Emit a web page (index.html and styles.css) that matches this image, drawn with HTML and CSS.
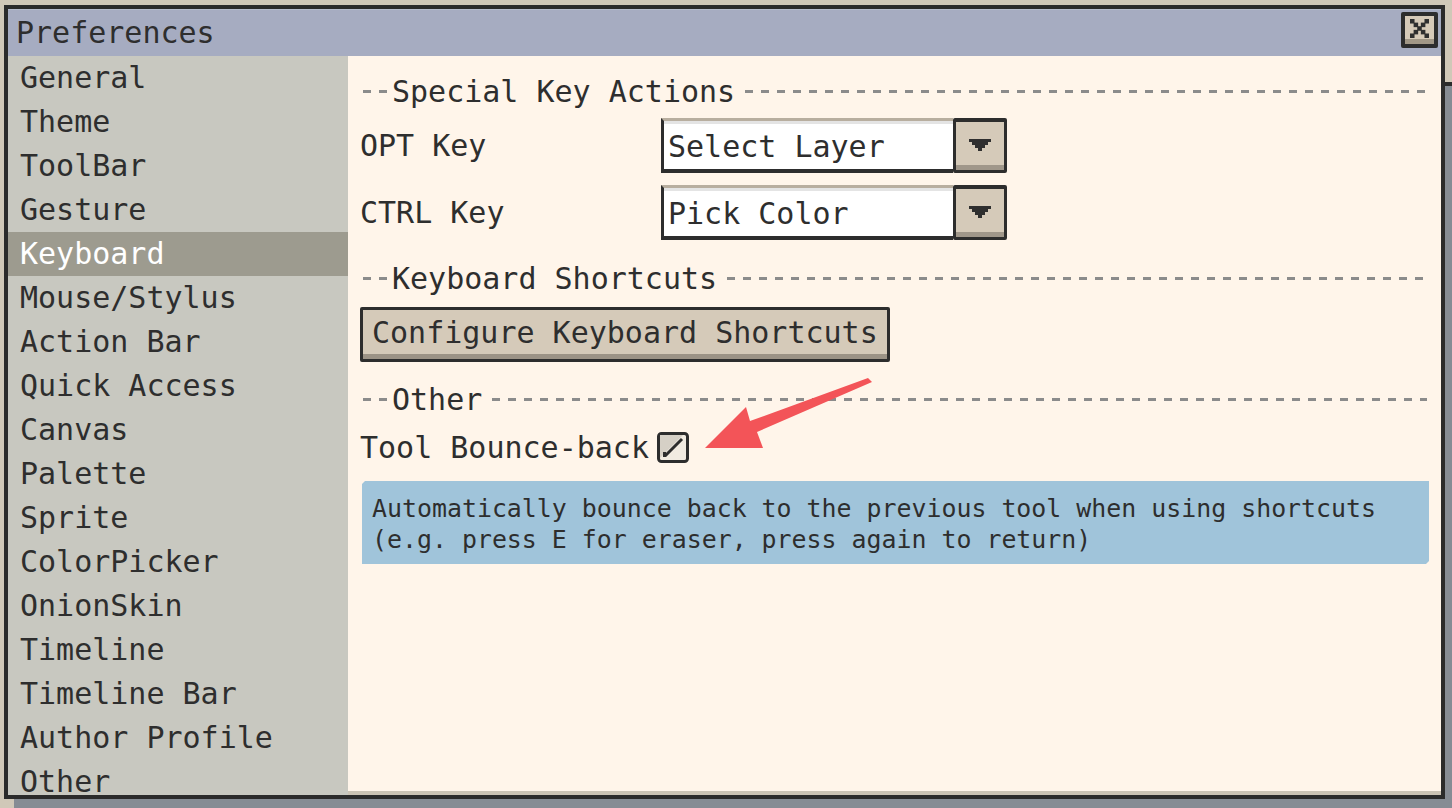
FILE: index.html
```html
<!DOCTYPE html>
<html>
  <head>
    <meta name="viewport" content="width=device-width, initial-scale=1" />
    <link rel="stylesheet" href="styles.css">
  </head>
  <body>
    <!-- Preferences dialog -->
    <div class="window">
      <div class="titlebar">
        <span class="title">Preferences</span>
        <button type="button" class="close-btn">
          <svg width="21" height="21" viewBox="0 0 21 21">
            <g fill="#2f2f2f">
              <rect x="0" y="0" width="5" height="5" />
              <rect x="4" y="4" width="5" height="5" />
              <rect x="8" y="8" width="5" height="5" />
              <rect x="12" y="12" width="5" height="5" />
              <rect x="16" y="16" width="5" height="5" />
              <rect x="16" y="0" width="5" height="5" />
              <rect x="12" y="4" width="5" height="5" />
              <rect x="4" y="12" width="5" height="5" />
              <rect x="0" y="16" width="5" height="5" />
            </g>
          </svg>
        </button>
      </div>

      <div class="main">
        <!-- Category list -->
        <ul class="sidebar">
          <li>General</li>
          <li>Theme</li>
          <li>ToolBar</li>
          <li>Gesture</li>
          <li class="active">Keyboard</li>
          <li>Mouse/Stylus</li>
          <li>Action Bar</li>
          <li>Quick Access</li>
          <li>Canvas</li>
          <li>Palette</li>
          <li>Sprite</li>
          <li>ColorPicker</li>
          <li>OnionSkin</li>
          <li>Timeline</li>
          <li>Timeline Bar</li>
          <li>Author Profile</li>
          <li>Other</li>
        </ul>

        <div class="content">
          <div class="section-head head-first">
            <span class="dash-lead"></span>
            <span class="head-text">Special Key Actions</span>
            <span class="dash-fill"></span>
          </div>

          <div class="field-row row-opt">
            <label class="field-label">OPT Key</label>
            <div class="combo">
              <div class="combo-value">Select Layer</div>
              <div class="combo-btn">
                <svg width="22" height="12" viewBox="0 0 22 12">
                  <path d="M0 0H22V3H19V6H16V9H13V12H9V9H6V6H3V3H0Z" fill="#2f2f2f" />
                </svg>
              </div>
            </div>
          </div>

          <div class="field-row row-ctrl">
            <label class="field-label">CTRL Key</label>
            <div class="combo">
              <div class="combo-value">Pick Color</div>
              <div class="combo-btn">
                <svg width="22" height="12" viewBox="0 0 22 12">
                  <path d="M0 0H22V3H19V6H16V9H13V12H9V9H6V6H3V3H0Z" fill="#2f2f2f" />
                </svg>
              </div>
            </div>
          </div>

          <div class="section-head head-shortcuts">
            <span class="dash-lead"></span>
            <span class="head-text">Keyboard Shortcuts</span>
            <span class="dash-fill"></span>
          </div>

          <button type="button" class="plain-btn">Configure Keyboard Shortcuts</button>

          <div class="section-head head-other">
            <span class="dash-lead"></span>
            <span class="head-text">Other</span>
            <span class="dash-fill"></span>
          </div>

          <div class="check-row">
            <span>Tool Bounce-back</span>
            <svg class="checkbox" width="32" height="31" viewBox="0 0 32 31">
              <rect x="1.5" y="1.5" width="29" height="28" rx="3" fill="#f1ebe1" stroke="#2d2d2d" stroke-width="3" />
              <path d="M3 3H26L3 26Z" fill="#d6d0c6" />
              <path d="M8 24L25 7" stroke="#2d2d2d" stroke-width="3" />
              <rect x="6" y="20" width="3" height="5" fill="#2d2d2d" />
            </svg>
          </div>

          <div class="info-box">
            Automatically bounce back to the previous tool when using shortcuts<br>
            (e.g. press E for eraser, press again to return)
          </div>
        </div>
      </div>
    </div>

    <!-- red annotation arrow over the dialog -->
    <svg class="annotation" width="180" height="84" viewBox="700 374 180 84">
      <path d="M868 378 L872 382 L757 432 L763 448 L705 448 L746 407 L750 421 Z" fill="#f35458" />
    </svg>
  </body>
</html>
```

FILE: styles.css
```css
body {
  margin: 0;
  font-family: "DejaVu Sans Mono", "Liberation Mono", monospace;
  color: #2e2e2e;
  background:
    linear-gradient(#868c94, #868c94) 14px 799px / 100% 20px no-repeat,
    linear-gradient(#2b2b2b, #2b2b2b) 1445px 82px / 10px 4px no-repeat,
    linear-gradient(#868c94, #868c94) 1445px 86px / 10px 100% no-repeat,
    #d0c8b8;
  height: 808px;
  overflow: hidden;
  position: relative;
}

.window {
  margin: 5px 0 0 4px;
  width: 1433px;
  height: 786px;
  border: 4px solid #2b2b2b;
  display: flex;
  flex-direction: column;
  overflow: hidden;
}

/* Title bar */
.titlebar {
  height: 47px;
  flex-shrink: 0;
  box-sizing: border-box;
  background-color: #a6acc1;
  border-top: 1px solid #b6bbcc;
  display: flex;
  justify-content: space-between;
  align-items: flex-start;
  padding-left: 8px;
}

.title {
  font-size: 30px;
  line-height: 46px;
}

.close-btn {
  width: 37px;
  height: 36px;
  margin: 2px 3px 0 0;
  padding: 0 0 4px;
  border: 4px solid #2d2d2d;
  border-radius: 2px;
  background-color: #d6cab8;
  box-shadow: inset 0 -5px #a19786;
  display: flex;
  align-items: center;
  justify-content: center;
  box-sizing: border-box;
}

.close-btn svg {
  width: 19px;
  height: 19px;
}

.main {
  flex: 1;
  display: flex;
  min-height: 0;
}

/* Left category list */
.sidebar {
  list-style: none;
  margin: 0;
  padding: 0;
  width: 340px;
  flex-shrink: 0;
  background-color: #c8c8c0;
  overflow: hidden;
}

.sidebar li {
  height: 44px;
  line-height: 44px;
  padding-left: 12px;
  font-size: 30px;
  white-space: nowrap;
}

.sidebar li.active {
  background-color: #9d9b8f;
  color: #ffffff;
}

/* Right settings panel */
.content {
  flex: 1;
  background-color: #fff5ea;
  border-bottom: 4px solid #cbc3b4;
  padding: 13px 12px 0 12px;
  display: flex;
  flex-direction: column;
  align-items: flex-start;
  font-size: 30px;
}

.section-head {
  height: 44px;
  width: 100%;
  display: flex;
  align-items: center;
}

.dash-lead,
.dash-fill {
  height: 3px;
  background: repeating-linear-gradient(to right, #8b8b8b 0 8px, transparent 8px 16px);
}

.dash-lead {
  width: 24px;
  margin-left: 3px;
}

.head-text {
  margin: 0 10px 0 5px;
}

.dash-fill {
  flex: 1;
  margin-right: 2px;
}

.head-shortcuts {
  margin-top: 16px;
}

.head-other {
  margin-top: 15px;
}

.field-row {
  display: flex;
  align-items: center;
  height: 55px;
}

.row-opt {
  margin-top: 5px;
}

.row-ctrl {
  margin-top: 12px;
}

.field-label {
  width: 301px;
}

.combo {
  display: flex;
  height: 55px;
}

.combo-value {
  width: 292px;
  box-sizing: border-box;
  background-color: #ffffff;
  border-top: 3px solid #b8ae9f;
  border-left: 3px solid #2d2d2d;
  border-bottom: 4px solid #2d2d2d;
  box-shadow: inset 0 3px #e4e4e4;
  padding: 3px 0 0 4px;
  display: flex;
  align-items: center;
}

.combo-btn {
  width: 54px;
  box-sizing: border-box;
  border: 3px solid #2d2d2d;
  border-top-width: 4px;
  border-radius: 2px;
  background-color: #d5cab9;
  box-shadow: inset 0 -5px #a0978a;
  display: flex;
  align-items: center;
  justify-content: center;
  padding-bottom: 2px;
}

.plain-btn {
  margin-top: 7px;
  height: 55px;
  padding: 0 9px 4px;
  font-family: inherit;
  font-size: 30px;
  color: #2e2e2e;
  background-color: #d5cab9;
  border: 3px solid #2d2d2d;
  border-radius: 2px;
  box-shadow: inset 0 -5px #9c9386;
}

.check-row {
  margin-top: 10px;
  height: 32px;
  display: flex;
  align-items: center;
}

.checkbox {
  margin-left: 8px;
}

.info-box {
  margin: 18px 0 0 2px;
  align-self: stretch;
  height: 83px;
  box-sizing: border-box;
  padding: 12px 10px 0;
  background-color: #a0c4da;
  font-size: 24.9px;
  line-height: 31px;
  white-space: nowrap;
  clip-path: polygon(3px 0, 100% 0, 100% calc(100% - 3px), calc(100% - 3px) 100%, 0 100%, 0 3px);
}

.annotation {
  position: absolute;
  left: 700px;
  top: 374px;
}
```
